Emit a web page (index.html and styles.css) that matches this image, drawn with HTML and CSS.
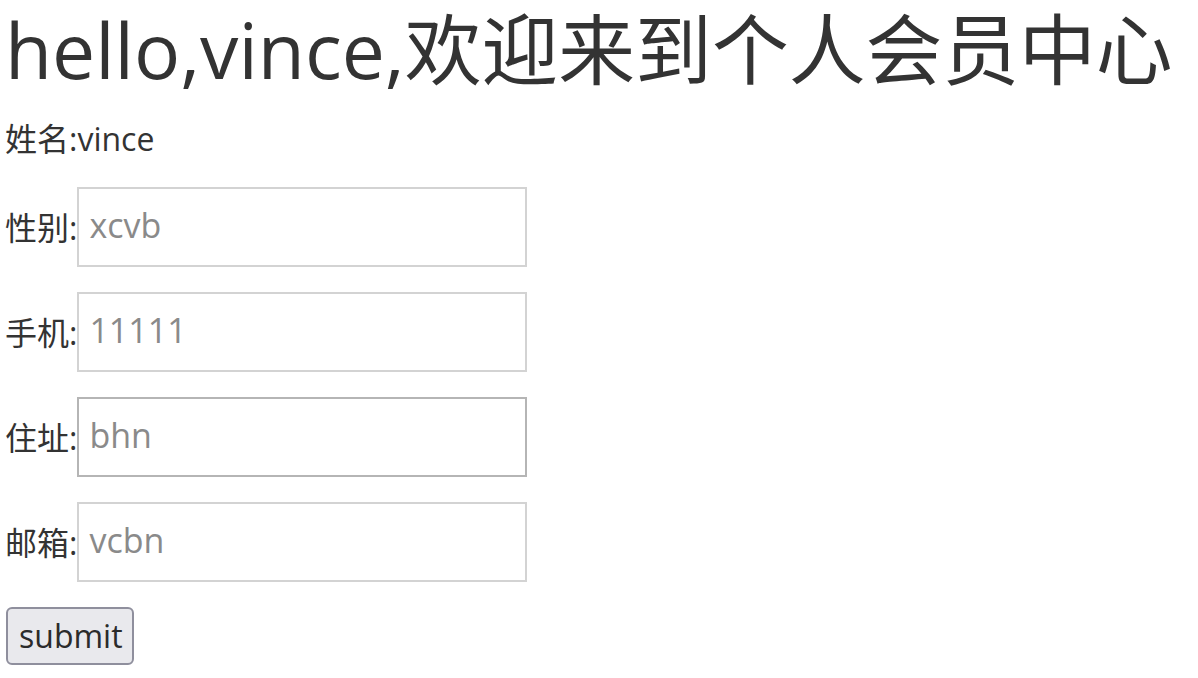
FILE: index.html
```html
<!DOCTYPE html>
<html lang="zh-CN">
<head>
<meta charset="utf-8">
<title>个人会员中心</title>
<link rel="stylesheet" href="styles.css">
</head>
<body>
<h1 class="title">hello,vince,欢迎来到个人会员中心</h1>
<p class="name">姓名:vince</p>
<form class="form">
  <div class="row"><label class="label">性别:</label><input class="field" type="text" placeholder="xcvb"></div>
  <div class="row"><label class="label">手机:</label><input class="field" type="text" placeholder="11111"></div>
  <div class="row"><label class="label">住址:</label><input class="field field-hover" type="text" placeholder="bhn"></div>
  <div class="row"><label class="label">邮箱:</label><input class="field" type="text" placeholder="vcbn"></div>
  <div class="actions"><button class="submit" type="button">submit</button></div>
</form>
</body>
</html>
```
FILE: styles.css
```css
html, body {
  background: #ffffff;
}
body {
  margin: 0;
  padding: 0 5px;
  font-family: "Open Sans", "Noto Sans CJK SC", sans-serif;
  color: #333333;
  font-size: 32px;
}
.title {
  margin: 0;
  font-size: 76.8px;
  font-weight: 400;
  line-height: 100px;
}
.name {
  margin: 17px 0 0;
  line-height: 43px;
}
.form {
  margin-top: 27px;
  display: flex;
  flex-direction: column;
  gap: 25px;
}
.row {
  display: flex;
  align-items: center;
}
.label {
  line-height: 43px;
}
.field {
  box-sizing: border-box;
  width: 450px;
  height: 80px;
  margin: 0;
  padding: 0 10px 4px;
  border: 2px solid #d3d3d3;
  border-radius: 0;
  outline: none;
  font-family: "Open Sans", "Noto Sans CJK SC", sans-serif;
  font-size: 34px;
  color: #333333;
  background: #ffffff;
}
.field::placeholder {
  color: #8a8a8a;
  opacity: 1;
}
.field-hover {
  border-color: #b5b5b5;
}
.actions {
  display: flex;
}
.submit {
  box-sizing: border-box;
  height: 58px;
  margin: 0 0 0 1px;
  padding: 0 9px 0 11px;
  border: 2px solid #8f8f9d;
  border-radius: 6px;
  background: #e9e9ed;
  color: #2b2b2b;
  font-family: "Open Sans", "Noto Sans CJK SC", sans-serif;
  font-size: 32px;
  line-height: 1;
}
```
